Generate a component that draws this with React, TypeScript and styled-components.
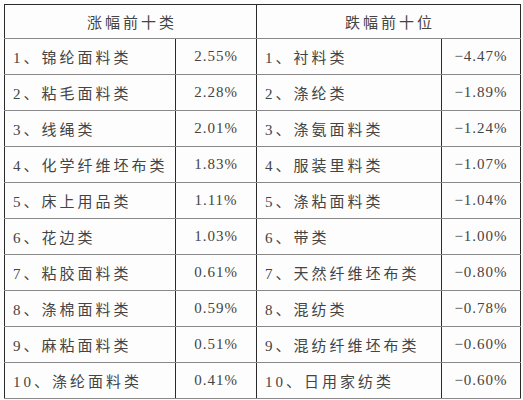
import React from "react";
import styled, { createGlobalStyle } from "styled-components";

const GlobalStyle = createGlobalStyle`
  html, body {
    margin: 0;
    padding: 0;
    background: #fff;
  }
`;

const Page = styled.div`
  width: 523px;
  height: 400px;
  padding: 4px 0 0 4px;
  box-sizing: border-box;
  background: #fdfdfd;
`;

const Table = styled.table`
  border-collapse: collapse;
  table-layout: fixed;
  width: 516px;
  font-family: "Liberation Serif", "Noto Sans CJK SC", serif;
  color: #444;
  font-size: 15px;
  border: 1px solid #2a2a2a;
`;

const Head = styled.th`
  height: 33px;
  padding: 0 0 0 3px;
  font-weight: 400;
  letter-spacing: 3px;
  text-align: center;
  border-left: 1px solid #2a2a2a;
  border-right: 1px solid #2a2a2a;
  border-bottom: 1px solid #8a8a8a;
`;

const Cell = styled.td<{ $value?: boolean }>`
  height: 35px;
  padding: 0 0 0 ${(p) => (p.$value ? "0" : "8px")};
  text-align: ${(p) => (p.$value ? "center" : "left")};
  letter-spacing: ${(p) => (p.$value ? "1px" : "3px")};
  white-space: nowrap;
  border-left: 1px solid #2a2a2a;
  border-right: 1px solid #2a2a2a;
  border-bottom: 1px solid #8a8a8a;
`;

const rises = [
  ["锦纶面料类", "2.55%"],
  ["粘毛面料类", "2.28%"],
  ["线绳类", "2.01%"],
  ["化学纤维坯布类", "1.83%"],
  ["床上用品类", "1.11%"],
  ["花边类", "1.03%"],
  ["粘胶面料类", "0.61%"],
  ["涤棉面料类", "0.59%"],
  ["麻粘面料类", "0.51%"],
  ["涤纶面料类", "0.41%"],
];

const falls = [
  ["衬料类", "−4.47%"],
  ["涤纶类", "−1.89%"],
  ["涤氨面料类", "−1.24%"],
  ["服装里料类", "−1.07%"],
  ["涤粘面料类", "−1.04%"],
  ["带类", "−1.00%"],
  ["天然纤维坯布类", "−0.80%"],
  ["混纺类", "−0.78%"],
  ["混纺纤维坯布类", "−0.60%"],
  ["日用家纺类", "−0.60%"],
];

export default function App() {
  return (
    <>
      <GlobalStyle />
      <Page>
        <Table>
          <colgroup>
            <col style={{ width: 171 }} />
            <col style={{ width: 81 }} />
            <col style={{ width: 185 }} />
            <col style={{ width: 79 }} />
          </colgroup>
          <thead>
            <tr>
              <Head colSpan={2}>涨幅前十类</Head>
              <Head colSpan={2}>跌幅前十位</Head>
            </tr>
          </thead>
          <tbody>
            {rises.map((r, i) => (
              <tr key={i}>
                <Cell>
                  {i + 1}、{r[0]}
                </Cell>
                <Cell $value>{r[1]}</Cell>
                <Cell>
                  {i + 1}、{falls[i][0]}
                </Cell>
                <Cell $value>{falls[i][1]}</Cell>
              </tr>
            ))}
          </tbody>
        </Table>
      </Page>
    </>
  );
}
